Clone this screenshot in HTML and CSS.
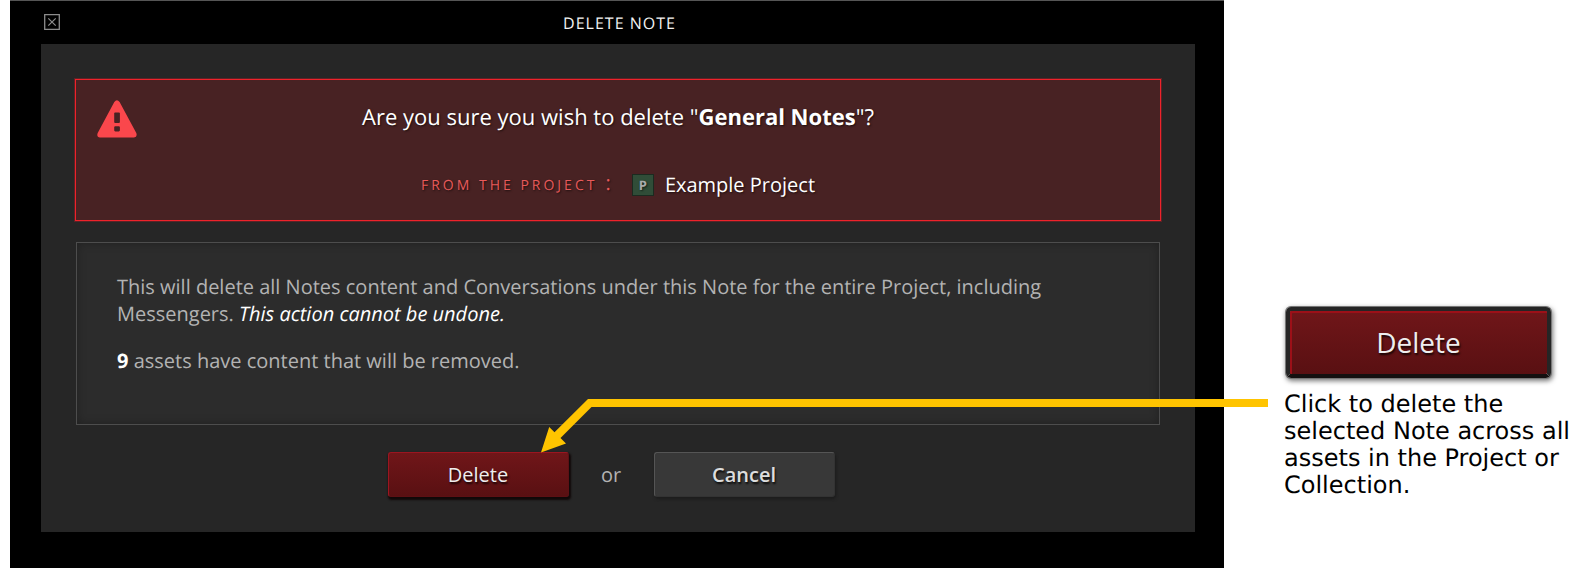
FILE: index.html
```html
<!DOCTYPE html>
<html lang="en">
<head>
<meta charset="utf-8">
<title>Delete Note</title>
<link rel="stylesheet" href="styles.css">
</head>
<body class="page">
<main class="dialog">
  <header class="titlebar">
    <button class="close" type="button" aria-label="Close">
      <svg viewBox="0 0 16 16" width="16" height="16" fill="none" stroke="#8c8c8c"><path stroke-width="1.3" d="M.7.7h14.6v14.6H.7z"/><path stroke-width="1.2" d="M4.3 4.3l7.4 7.4M11.7 4.3l-7.4 7.4"/></svg>
    </button>
    <h1 class="title">DELETE NOTE</h1>
  </header>
  <div class="panel">
    <section class="alert">
      <svg class="alert-icon" viewBox="0 0 40 38" width="40" height="38"><path fill="#fa474c" fill-rule="evenodd" d="M17.3 2.1Q19.9-1.6 22.6 2.1L39.3 33Q40.6 37.3 37 37.5H3Q-.7 37.3.7 33ZM17.2 13v9q0 1 1 1h3.700q1 0 1-1v-9q0-.6-1-.6h-3.700q-1 0-1 .6ZM18.300 26.200q-1.100 0-1.100 1.100v3q0 1.100 1.100 1.100h3.500q1.100 0 1.100-1.100v-3q0-1.100-1.100-1.100Z"/></svg>
      <p class="question">Are you sure you wish to delete "<strong class="note-name">General Notes</strong>"?</p>
      <p class="source"><span class="source-label">FROM THE PROJECT<span class="colon"> :</span></span><span class="badge">P</span><span class="project">Example Project</span></p>
    </section>
    <section class="details">
      <p class="para">This will delete all Notes content and Conversations under this Note for the entire Project, including Messengers. <em class="warning">This action cannot be undone.</em></p>
      <p class="para"><strong class="count">9</strong> assets have content that will be removed.</p>
    </section>
    <div class="actions">
      <button class="btn btn-delete" type="button">Delete</button>
      <span class="or">or</span>
      <button class="btn btn-cancel" type="button">Cancel</button>
    </div>
  </div>
  <div class="arrow" aria-hidden="true">
    <svg class="arrow-head" viewBox="0 0 51 54" width="51" height="54"><path fill="#ffc400" d="M0 53.500 8.200 28 13.500 33.300 47 0H51V8H50.500L19.500 39 25 44.500Z"/></svg>
    <div class="arrow-line"></div>
  </div>
</main>
<aside class="callout">
  <button class="btn btn-large" type="button">Delete</button>
  <p class="caption">Click to delete the selected Note across all assets in the Project or Collection.</p>
</aside>
</body>
</html>
```
FILE: styles.css
```css
* { box-sizing: border-box; }

.page {
  margin: 0;
  padding-left: 10px;
  min-height: 100vh;
  display: flex;
  gap: 60px;
  background: #fff;
  font-family: "Open Sans", "Noto Sans", sans-serif;
  font-size: 20px;
  font-weight: 500;
  text-rendering: geometricPrecision;
}

h1, p { margin: 0; }

.dialog {
  position: relative;
  flex: 1;
  padding: 0 29px 36px 31px;
  border-top: 1px solid #555;
  background: #000;
}

.titlebar {
  display: grid;
  grid-template-columns: 24px 1fr 24px;
  align-items: center;
  height: 43px;
  padding-left: 3px;
}

.close {
  display: flex;
  width: 24px;
  padding: 0 0 2px;
  border: 0;
  background: none;
}

.title {
  color: #f2f2f2;
  font-size: 16px;
  font-weight: 500;
  line-height: 20px;
  letter-spacing: 1px;
  text-align: center;
}

.panel {
  padding: 35px 34px;
  background: #262626;
}

.alert {
  position: relative;
  height: 142px;
  padding: 20px 20px;
  border: 1px solid #ee222a;
  box-shadow: 0 0 0 1px #5c2226;
  background: #482223;
  color: #fff;
  text-align: center;
  text-shadow: 1px 1px 2px #0009;
}

.alert-icon {
  position: absolute;
  left: 21px;
  top: 20px;
}

.question {
  font-size: 22px;
  line-height: 34px;
}

.note-name { font-weight: 700; }

.source {
  display: flex;
  justify-content: center;
  align-items: center;
  margin-top: 33px;
  line-height: 32px;
}

.source-label {
  color: #e85a5a;
  font-size: 14px;
  letter-spacing: 3px;
}

.colon { font-size: 20px; }

.badge {
  width: 22px;
  height: 22px;
  margin: 0 11px 0 18px;
  border: 1px solid #1b2b20;
  background: #304d38;
  color: #aaa;
  font-size: 13px;
  font-weight: 700;
  line-height: 20px;
}

.details {
  display: grid;
  align-content: start;
  gap: 20px;
  height: 183px;
  margin: 21px 1px 0;
  padding: 30px 40px;
  border: 1px solid #4d4d4d;
  background: #2c2c2c;
  box-shadow: inset 0 0 10px #0004;
  color: #b3b3b3;
  font-weight: 400;
  line-height: 27px;
}

.warning {
  color: #fff;
  font-weight: 500;
}

.count { color: #fff; }

.actions {
  display: grid;
  grid-template-columns: 181px 85px 181px;
  justify-content: center;
  align-items: center;
  margin-top: 27px;
  padding-right: 14px;
}

.btn {
  height: 45px;
  padding: 0;
  border: 1px solid;
  border-radius: 3px;
  color: #eee;
  font: 500 20px/28px "Open Sans", "Noto Sans", sans-serif;
  text-shadow: 1px 2px 2px #000c;
}

.btn-delete {
  border-color: #9c1520 #5d1014 #5d1014 #9c1520;
  background: linear-gradient(#701619, #591012);
  box-shadow: 1px 2px 2px 1px #100808;
}

.btn-cancel {
  border-color: #555 #333 #333 #555;
  background: #383838;
  box-shadow: 1px 2px 3px #1c1c1c;
  color: #ddd;
  font-weight: 600;
}

.or {
  color: #b3b3b3;
  font-weight: 400;
  text-align: center;
}

.arrow {
  position: absolute;
  top: 398px;
  left: calc(50% - 76px);
  right: -44px;
  display: flex;
}

.arrow-line {
  flex: 1;
  height: 8px;
  background: #ffc400;
}

.callout {
  width: 296px;
  padding-top: 307px;
}

.btn-large {
  display: block;
  width: 265px;
  height: 71px;
  margin-left: 2px;
  padding-bottom: 2px;
  border: 4px solid #252525;
  border-bottom-color: #141010;
  border-radius: 5px;
  background: linear-gradient(#701619, #591012) padding-box;
  box-shadow: inset 2px 2px 0 #9c1018, 0 0 0 1px #777, 1px 2px 5px 1px #0008;
  font-size: 28px;
}

.caption {
  margin-top: 13px;
  color: #000;
  font-family: Verdana, "DejaVu Sans", sans-serif;
  font-size: 24px;
  font-weight: 400;
  line-height: 27px;
}
```
